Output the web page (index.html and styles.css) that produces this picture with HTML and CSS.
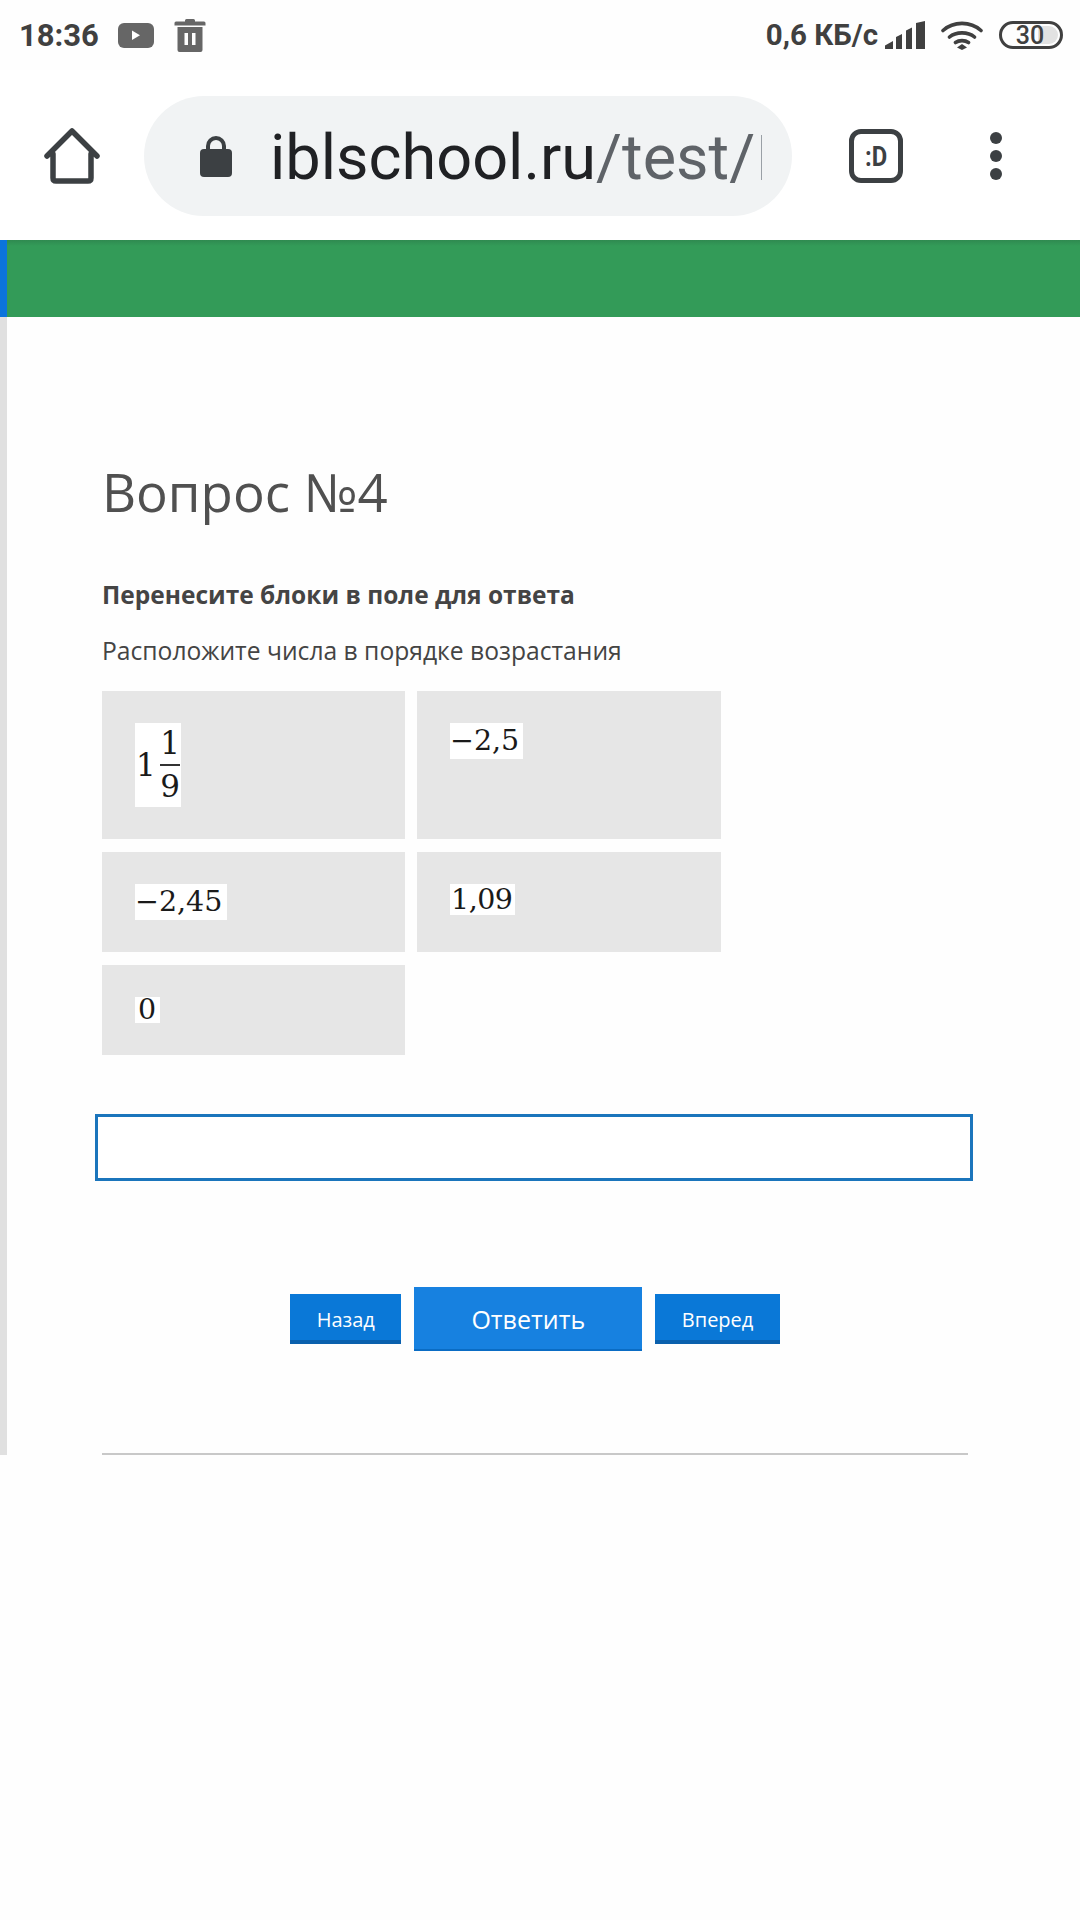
FILE: index.html
```html
<!DOCTYPE html>
<html lang="ru">
<head>
<meta charset="utf-8">
<title>Вопрос №4</title>
<link rel="stylesheet" href="styles.css">
</head>
<body>
<header class="status">
  <div class="status-left">
    <span class="clock">18:36</span>
    <svg class="ic-yt" viewBox="0 0 36 25"><rect width="36" height="25" rx="6" fill="#666"/><path d="M14 7.5v9.5l8-4.75z" fill="#fff"/></svg>
    <svg class="ic-trash" viewBox="0 0 32 34"><path d="M11 3.500V2.500Q11 1 12.500 1h7Q21 1 21 2.500V3.500h9Q31.500 3.500 31.500 5V7.500H.5V5Q.5 3.500 2 3.500z" fill="#666"/><path fill-rule="evenodd" d="M3.500 9h25v23q0 2-2 2h-21q-2 0-2-2zM10.500 15v12h3.500V15zM18 15v12h3.500V15z" fill="#666"/></svg>
  </div>
  <div class="status-right">
    <span class="speed">0,6 КБ/с</span>
    <svg class="ic-signal" viewBox="0 0 40 28"><path d="M0 28V24.500L8 20V28zM11 28V16L17 13V28zM21 28V9.500L27 6.500V28zM31 28V2L40 0V28z" fill="#404040"/></svg>
    <svg class="ic-wifi" viewBox="0 0 42 30"><path d="M2 10.500C12.500 1 29.500 1 40 10.500M8.500 17C15 11.500 27 11.500 33.500 17M14.500 22.500C18 20 24 20 27.500 22.500" fill="none" stroke="#404040" stroke-width="3.600" stroke-linecap="round"/><path d="M21 24l5 3.500-5 2.500-5-2.500z" fill="#404040"/></svg>
    <div class="battery"><span class="battery-fill"></span><span class="battery-num">30</span></div>
  </div>
</header>

<nav class="toolbar">
  <svg class="ic-home" viewBox="0 0 56 56"><path d="M3 28L28 3L53 28M9 26V50Q9 53 12 53H44Q47 53 47 50V26" fill="none" stroke="#3c4043" stroke-width="5.500" stroke-linecap="round" stroke-linejoin="round"/></svg>
  <div class="omnibox">
    <svg class="ic-lock" viewBox="0 0 32 42"><path d="M8 16V11a8 8 0 0 1 16 0V16" fill="none" stroke="#3c4043" stroke-width="4"/><rect y="14" width="32" height="28" rx="4" fill="#3c4043"/></svg>
    <div class="url"><span class="host">iblschool.ru</span><span class="path">/test/</span><span class="url-cut"></span></div>
  </div>
  <div class="tabs"><span class="tabs-label">:D</span></div>
  <div class="menu"><span class="dot"></span><span class="dot"></span><span class="dot"></span></div>
</nav>

<div class="banner"><span class="banner-edge"></span></div>

<main class="content">
  <h1 class="title">Вопрос №4</h1>
  <p class="hint">Перенесите блоки в поле для ответа</p>
  <p class="task">Расположите числа в порядке возрастания</p>
  <div class="tiles">
    <div class="tile">
      <span class="math mixed">
        <span class="whole">1</span>
        <span class="frac"><span class="num">1</span><span class="bar"></span><span class="den">9</span></span>
      </span>
    </div>
    <div class="tile"><span class="math m-25">−2,5</span></div>
    <div class="tile"><span class="math m-245">−2,45</span></div>
    <div class="tile"><span class="math m-109">1,09</span></div>
    <div class="tile"><span class="math m-0">0</span></div>
  </div>
  <div class="dropzone"></div>
  <div class="actions">
    <a class="btn">Назад</a>
    <a class="btn btn-main">Ответить</a>
    <a class="btn">Вперед</a>
  </div>
  <hr class="rule">
</main>
</body>
</html>
```

FILE: styles.css
```css
* { box-sizing: border-box; }
html, body { margin: 0; padding: 0; }
body {
  width: 1080px;
  height: 1920px;
  background: #fefefe;
  font-family: "Open Sans", "Liberation Sans", sans-serif;
  overflow: hidden;
}

/* status bar */
.status {
  height: 70px;
  padding: 0 17px 0 19px;
  display: flex;
  justify-content: space-between;
  align-items: center;
  font-family: Roboto, sans-serif;
  color: #404040;
}
.status-left, .status-right { display: flex; align-items: center; }
.clock { font-size: 31px; font-weight: 700; }
.ic-yt { width: 36px; height: 25px; margin-left: 19px; }
.ic-trash { width: 32px; height: 34px; margin-left: 20px; }
.speed { font-size: 29.500px; font-weight: 700; }
.ic-signal { width: 40px; height: 28px; margin-left: 7px; }
.ic-wifi { width: 42px; height: 30px; margin-left: 16px; }
.battery {
  position: relative;
  width: 64px;
  height: 28px;
  margin-left: 16px;
  border: 3px solid #404040;
  border-radius: 14px;
  display: flex;
  align-items: center;
  justify-content: center;
  overflow: hidden;
}
.battery-fill {
  position: absolute;
  top: 2px;
  bottom: 2px;
  right: 2px;
  width: 20px;
  border-radius: 0 10px 10px 0;
  background: #e2e2e2;
}
.battery-num { position: relative; font-size: 25px; font-weight: 500; line-height: 1; margin-right: 2px; }

/* browser toolbar */
.toolbar {
  height: 170px;
  padding-top: 2px;
  display: flex;
  align-items: center;
  background: #fff;
}
.ic-home { width: 56px; height: 56px; margin-left: 44px; }
.omnibox {
  width: 648px;
  height: 120px;
  margin-left: 44px;
  border-radius: 60px;
  background: #f1f3f4;
  display: flex;
  align-items: center;
  padding-left: 56px;
}
.ic-lock { width: 32px; height: 42px; }
.url {
  width: 492px;
  margin-left: 38px;
  padding-top: 3px;
  display: flex;
  align-items: center;
  overflow: hidden;
  white-space: nowrap;
  font-family: Roboto, sans-serif;
  font-size: 63px;
  line-height: 80px;
}
.url-cut { width: 1px; height: 45px; margin-left: auto; background: #9aa0a6; }
.host { color: #202124; }
.path { color: #5f6368; }
.tabs {
  width: 54px;
  height: 54px;
  margin-left: 57px;
  border: 5.500px solid #3c4043;
  border-radius: 12px;
  display: flex;
  align-items: center;
  justify-content: center;
}
.tabs-label {
  font-family: Roboto, sans-serif;
  font-size: 28px;
  font-weight: 700;
  color: #3c4043;
  transform: scaleX(0.85);
}
.menu {
  margin-left: 87px;
  display: flex;
  flex-direction: column;
  gap: 6px;
}
.dot { width: 12px; height: 12px; border-radius: 50%; background: #3c4043; }

/* page */
.banner {
  height: 77px;
  background: linear-gradient(#2f8a50 0, #339b58 6px);
}
.banner-edge { display: block; width: 7px; height: 77px; background: #0b74dc; }
.content {
  width: 1000px;
  border-left: 7px solid #e0e0e0;
  padding: 139px 0 0 95px;
  color: #444;
}
.title {
  margin: 0;
  font-size: 52.800px;
  font-weight: 400;
  line-height: 72px;
  color: #505050;
}
.hint {
  margin: 50px 0 0;
  font-size: 24.500px;
  font-weight: 700;
  line-height: 34px;
}
.task {
  margin: 22px 0 0;
  font-size: 24.650px;
  line-height: 34px;
}

/* answer tiles */
.tiles {
  margin-top: 23px;
  display: grid;
  grid-template-columns: 303px 304px;
  column-gap: 12px;
  row-gap: 13px;
}
.tile {
  padding: 32px 33px;
  background: #e6e6e6;
}
.math {
  display: block;
  width: fit-content;
  background: #fff;
  color: #1a1a1a;
  font-family: "DejaVu Serif", "Liberation Serif", serif;
  font-size: 28.500px;
  white-space: nowrap;
}
.mixed {
  width: 46px;
  height: 84px;
  display: flex;
  align-items: center;
  padding-left: 1px;
  font-size: 31px;
}
.whole { width: 24px; }
.frac { display: flex; flex-direction: column; align-items: center; width: 20px; }
.num, .den { line-height: 41px; height: 41px; }
.bar { width: 20px; height: 2px; background: #333; margin: 0; }
.m-25 { width: 73px; height: 36px; line-height: 36px; }
.m-245 { width: 92px; height: 36px; line-height: 36px; }
.m-109 { width: 65px; height: 31px; line-height: 31px; padding-left: 1px; letter-spacing: -0.5px; }
.m-0 { width: 25px; height: 26px; line-height: 26px; padding-left: 3px; }

/* answer field */
.dropzone {
  width: 878px;
  height: 67px;
  margin: 59px 0 0 -7px;
  border: 3px solid #1b75bc;
  background: #fff;
}

/* buttons */
.actions {
  width: 866px;
  margin-top: 106px;
  display: flex;
  justify-content: center;
  align-items: center;
  gap: 13px;
}
.btn {
  display: block;
  padding: 0 26.500px;
  height: 50px;
  line-height: 52px;
  background: #0a78d7;
  border-bottom: 4px solid #0a60ad;
  color: #fff;
  font-size: 20px;
}
.btn-main {
  width: 228px;
  padding: 0;
  height: 64px;
  line-height: 64px;
  text-align: center;
  background: #1781e0;
  border-bottom: 2px solid #0a6cc4;
  font-size: 25px;
}
.rule {
  width: 866px;
  height: 2px;
  margin: 102px 0 0;
  border: 0;
  background: #c8c8c8;
}
```
